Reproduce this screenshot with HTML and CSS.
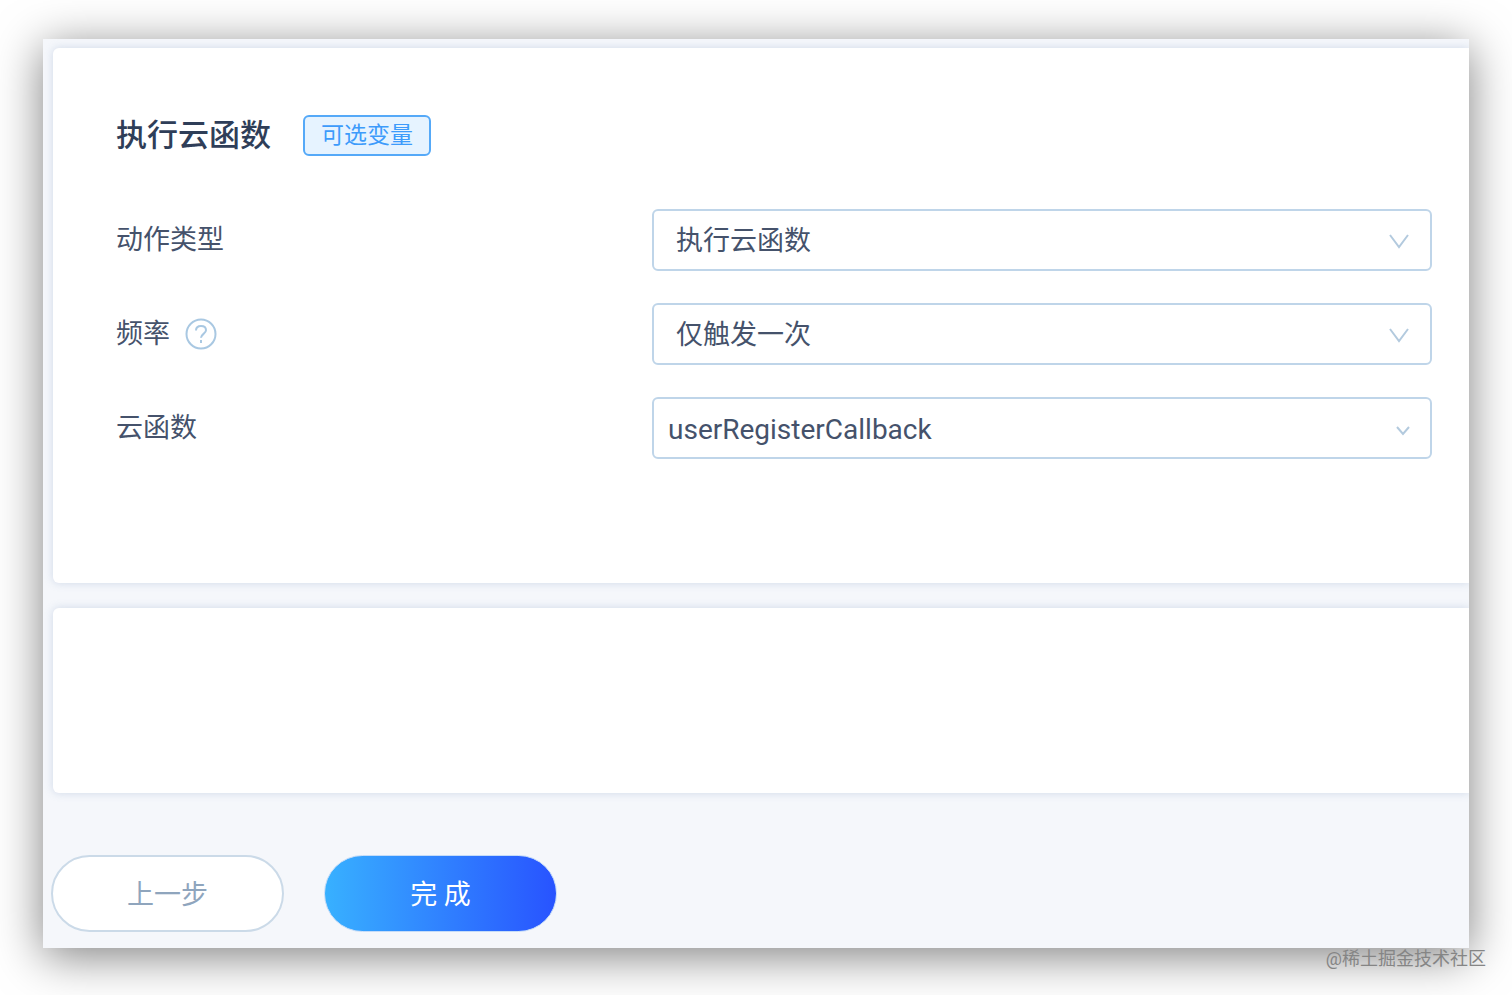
FILE: index.html
```html
<!DOCTYPE html>
<html lang="zh-CN">
<head>
  <meta charset="UTF-8" />
  <title>执行云函数</title>
  <link rel="stylesheet" href="styles.css">
</head>
<body>
  <main class="panel">
    <form id="actionForm">
      <section class="card card-action">
        <div class="card-header">
          <h1>执行云函数</h1>
          <button type="button" class="tag">可选变量</button>
        </div>

        <div class="form-row">
          <label for="actionType">动作类型</label>
          <div class="select-box">
            <select id="actionType">
              <option>执行云函数</option>
            </select>
            <svg class="arrow" viewBox="0 0 22 16" aria-hidden="true"><path d="M2 2l9 12 9-12" /></svg>
          </div>
        </div>

        <div class="form-row">
          <div class="label-group">
            <label for="frequency">频率</label>
            <svg class="help" viewBox="0 0 32 32" aria-hidden="true">
              <circle cx="16" cy="16" r="14.5" />
              <path d="M11 12.5c0-2.8 2-4.500 5-4.500s5 1.700 5 4.200c0 3.600-5 3.800-5 7.600" />
              <path d="M16 22v3" />
            </svg>
          </div>
          <div class="select-box">
            <select id="frequency">
              <option>仅触发一次</option>
            </select>
            <svg class="arrow" viewBox="0 0 22 16" aria-hidden="true"><path d="M2 2l9 12 9-12" /></svg>
          </div>
        </div>

        <div class="form-row">
          <label for="cloudFunction">云函数</label>
          <div class="select-box compact">
            <select id="cloudFunction">
              <option>userRegisterCallback</option>
            </select>
            <svg class="arrow" viewBox="0 0 16 12" aria-hidden="true"><path d="M2 2l6 7 6-7" /></svg>
          </div>
        </div>
      </section>

      <section class="card card-empty"></section>

      <div class="actions">
        <button type="button" class="btn btn-prev">上一步</button>
        <button type="submit" class="btn btn-done">完 成</button>
      </div>
    </form>
  </main>

  <div class="watermark">@稀土掘金技术社区</div>
</body>
</html>
```

FILE: styles.css
```css
* {
  box-sizing: border-box;
}

body {
  position: relative;
  margin: 0;
  padding: 39px 43px 47px;
  background-color: #fff;
  font-family: Roboto, "Noto Sans CJK SC", sans-serif;
  color: #45526b;
}

.panel {
  padding: 9px 0 16px 10px;
  background-color: #f5f7fb;
  box-shadow: 0 8px 44px rgba(0, 0, 0, 0.5);
}

.card {
  background-color: #fff;
  border-radius: 6px 0 0 6px;
  box-shadow: 0 0 8px rgba(120, 150, 190, 0.3);
  clip-path: inset(-12px 0 -12px -10px);
}

.card-action {
  padding: 67px 37px 124px 63px;
}

.card-empty {
  height: 185px;
  margin-top: 25px;
}

.card-header {
  display: flex;
  align-items: center;
  gap: 32px;
  margin-bottom: 53px;
}

h1 {
  margin: 0;
  font-size: 31px;
  font-weight: 500;
  line-height: 41px;
  color: #2f3e58;
}

.tag {
  height: 41px;
  padding: 1px 16px 0;
  border: 2px solid #55a9f8;
  border-radius: 6px;
  background-color: #e6f3ff;
  font-family: inherit;
  font-size: 23px;
  line-height: 36px;
  color: #3d9bfb;
  cursor: pointer;
}

.form-row {
  display: grid;
  grid-template-columns: 536px 1fr;
  align-items: center;
  font-size: 27px;
  line-height: 38px;
}

.form-row + .form-row {
  margin-top: 32px;
}

.label-group {
  display: flex;
  align-items: center;
  gap: 15px;
}

.help {
  width: 32px;
  height: 32px;
  fill: none;
  stroke: #a9c8e2;
  stroke-width: 2;
}

.select-box {
  position: relative;
}

select {
  display: block;
  width: 100%;
  height: 62px;
  padding: 2px 60px 0 22px;
  border: 2px solid #bfd5e9;
  border-radius: 6px;
  background-color: #fff;
  font-family: inherit;
  font-size: 27px;
  color: #45526b;
  appearance: none;
}

.compact select {
  padding-left: 14px;
  font-size: 28px;
}

.arrow {
  position: absolute;
  top: 24px;
  right: 22px;
  width: 22px;
  height: 16px;
  fill: none;
  stroke: #b3cade;
  stroke-width: 2;
  pointer-events: none;
}

.compact .arrow {
  top: 28px;
  right: 21px;
  width: 16px;
  height: 12px;
}

.actions {
  display: flex;
  gap: 40px;
  margin-top: 62px;
  margin-left: -2px;
}

.btn {
  width: 233px;
  height: 77px;
  padding: 0 0 2px;
  border-radius: 39px;
  font-family: inherit;
  font-size: 27px;
  cursor: pointer;
}

.btn-prev {
  border: 2px solid #cbdae8;
  background-color: #fff;
  color: #8fa5bd;
}

.btn-done {
  border: 1px solid #c5dcf8;
  background: linear-gradient(90deg, #38b1ff, #2853ff) border-box;
  color: #fff;
}

.watermark {
  position: absolute;
  right: 26px;
  bottom: 23px;
  font-size: 18px;
  line-height: 26px;
  color: #858585;
}
```
